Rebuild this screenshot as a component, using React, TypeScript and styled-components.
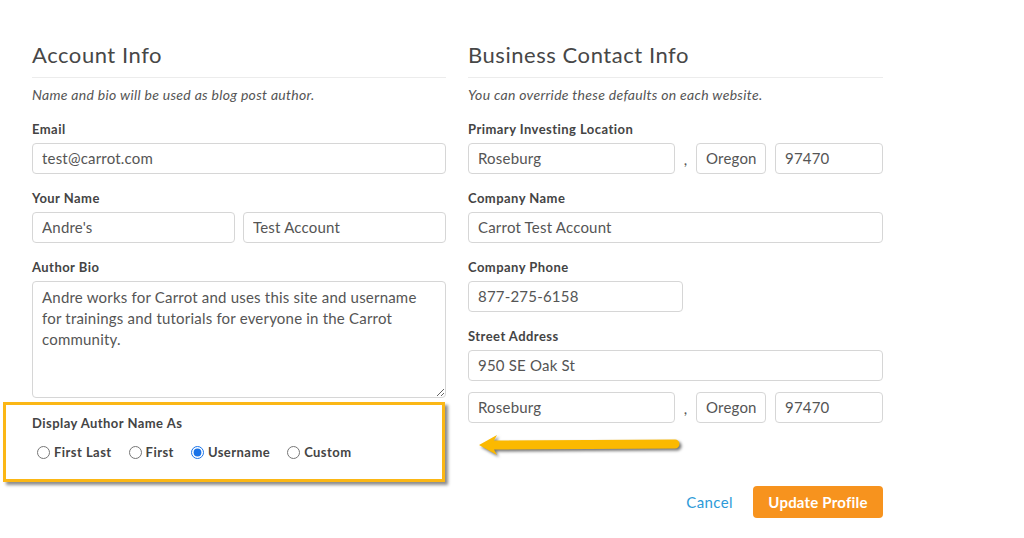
import React, { useState } from "react";
import styled, { createGlobalStyle } from "styled-components";

const GlobalStyle = createGlobalStyle`
  body {
    margin: 0;
    background: #fff;
    font-family: Lato, "Open Sans", Arial, sans-serif;
    color: #444;
  }
`;

const Page = styled.div`
  display: grid;
  grid-template-columns: 414px 415px;
  column-gap: 22px;
  align-items: start;
  padding: 41px 0 0 32px;
`;

const Column = styled.section`
  display: flex;
  flex-direction: column;
`;

const Heading = styled.h2`
  margin: 0;
  padding-bottom: 8px;
  border-bottom: 1px solid #ececec;
  font-size: 22px;
  line-height: 28px;
  font-weight: 400;
  letter-spacing: 0.55px;
  color: #474747;
`;

const Subtitle = styled.p`
  margin: 8px 0 16px;
  font-size: 14px;
  line-height: 18px;
  font-style: italic;
  letter-spacing: 0.3px;
  color: #555;
`;

const Field = styled.div<{ $gap?: number }>`
  display: flex;
  flex-direction: column;
  margin-bottom: ${(p) => (p.$gap ?? 15)}px;
`;

const Label = styled.label`
  font-size: 13px;
  line-height: 18px;
  font-weight: 700;
  letter-spacing: 0.45px;
  color: #444;
  margin-bottom: 5px;
`;

const Input = styled.input<{ $width?: number }>`
  box-sizing: border-box;
  height: 31px;
  width: ${(p) => (p.$width ? `${p.$width}px` : "100%")};
  padding: 0 9px 1px;
  border: 1px solid #d6d6d6;
  border-radius: 4px;
  font-family: inherit;
  font-size: 15px;
  letter-spacing: 0.2px;
  color: #555;
  background: #fff;
  outline: none;
`;

const TextArea = styled.textarea`
  box-sizing: border-box;
  height: 117px;
  width: 100%;
  padding: 5px 9px;
  border: 1px solid #d6d6d6;
  border-radius: 4px;
  font-family: inherit;
  font-size: 15px;
  line-height: 21px;
  letter-spacing: 0.2px;
  color: #555;
  resize: vertical;
  outline: none;
`;

const Pair = styled.div`
  display: grid;
  grid-template-columns: 1fr 1fr;
  column-gap: 8px;
`;

const CityRow = styled.div`
  display: flex;
  align-items: center;
`;

const Comma = styled.span`
  width: 21px;
  text-align: center;
  font-size: 15px;
  color: #555;
`;

const Highlight = styled.div`
  margin: 4px 1px 0 -29px;
  padding: 7px 0 18px 26px;
  border: 3px solid #fbb715;
  box-shadow: 3px 3px 3px rgba(0, 0, 0, 0.45);
`;

const RadioRow = styled.div`
  display: flex;
  align-items: center;
  gap: 17px;
  margin: 11px 0 0 5px;
`;

const RadioOption = styled.label`
  display: flex;
  align-items: center;
  gap: 4px;
  font-size: 13px;
  line-height: 18px;
  font-weight: 700;
  letter-spacing: 0.45px;
  color: #444;
  cursor: pointer;

  input {
    margin: 0;
    width: 13px;
    height: 13px;
    accent-color: #1a73e8;
  }
`;

const ArrowRow = styled.div`
  margin: 9px 0 0 8px;
  height: 26px;

  svg {
    display: block;
    filter: drop-shadow(2px 2px 1.5px rgba(0, 0, 0, 0.55));
  }
`;

const Actions = styled.div`
  display: flex;
  justify-content: flex-end;
  align-items: center;
  gap: 20px;
  margin-top: 28px;
`;

const CancelLink = styled.a`
  font-size: 15px;
  letter-spacing: 0.4px;
  color: #2d9ad8;
  text-decoration: none;
  cursor: pointer;
`;

const PrimaryButton = styled.button`
  height: 32px;
  width: 130px;
  border: none;
  border-radius: 4px;
  background: #f7931e;
  color: #fff;
  font-family: inherit;
  font-size: 15px;
  font-weight: 700;
  letter-spacing: 0.2px;
  cursor: pointer;
`;

const nameOptions = ["First Last", "First", "Username", "Custom"];

const App: React.FC = () => {
  const [display, setDisplay] = useState<string>("Username");

  return (
    <>
      <GlobalStyle />
      <Page>
        <Column>
          <Heading>Account Info</Heading>
          <Subtitle>Name and bio will be used as blog post author.</Subtitle>
          <Field>
            <Label>Email</Label>
            <Input defaultValue="test@carrot.com" />
          </Field>
          <Field>
            <Label>Your Name</Label>
            <Pair>
              <Input defaultValue="Andre's" />
              <Input defaultValue="Test Account" />
            </Pair>
          </Field>
          <Field $gap={0}>
            <Label>Author Bio</Label>
            <TextArea defaultValue="Andre works for Carrot and uses this site and username for trainings and tutorials for everyone in the Carrot community." />
          </Field>
          <Highlight>
            <Label>Display Author Name As</Label>
            <RadioRow>
              {nameOptions.map((opt) => (
                <RadioOption key={opt}>
                  <input
                    type="radio"
                    name="display"
                    checked={display === opt}
                    onChange={() => setDisplay(opt)}
                  />
                  {opt}
                </RadioOption>
              ))}
            </RadioRow>
          </Highlight>
        </Column>

        <Column>
          <Heading>Business Contact Info</Heading>
          <Subtitle>You can override these defaults on each website.</Subtitle>
          <Field>
            <Label>Primary Investing Location</Label>
            <CityRow>
              <Input defaultValue="Roseburg" style={{ flex: 1 }} />
              <Comma>,</Comma>
              <Input $width={70} defaultValue="Oregon" />
              <Input $width={108} defaultValue="97470" style={{ marginLeft: 9 }} />
            </CityRow>
          </Field>
          <Field>
            <Label>Company Name</Label>
            <Input defaultValue="Carrot Test Account" />
          </Field>
          <Field>
            <Label>Company Phone</Label>
            <Input $width={215} defaultValue="877-275-6158" />
          </Field>
          <Field $gap={11}>
            <Label>Street Address</Label>
            <Input defaultValue="950 SE Oak St" />
          </Field>
          <CityRow>
            <Input defaultValue="Roseburg" style={{ flex: 1 }} />
            <Comma>,</Comma>
            <Input $width={70} defaultValue="Oregon" />
            <Input $width={108} defaultValue="97470" style={{ marginLeft: 9 }} />
          </CityRow>
          <ArrowRow>
            <svg width="210" height="26" viewBox="0 0 210 26">
              <path
                d="M3 13 L21 3 L18 8.5 L199 7.5 A4.5 4.5 0 0 1 199 16.5 L18 17.5 L21 23 Z"
                fill="#fbb900"
              />
            </svg>
          </ArrowRow>
          <Actions>
            <CancelLink>Cancel</CancelLink>
            <PrimaryButton>Update Profile</PrimaryButton>
          </Actions>
        </Column>
      </Page>
    </>
  );
};

export default App;
